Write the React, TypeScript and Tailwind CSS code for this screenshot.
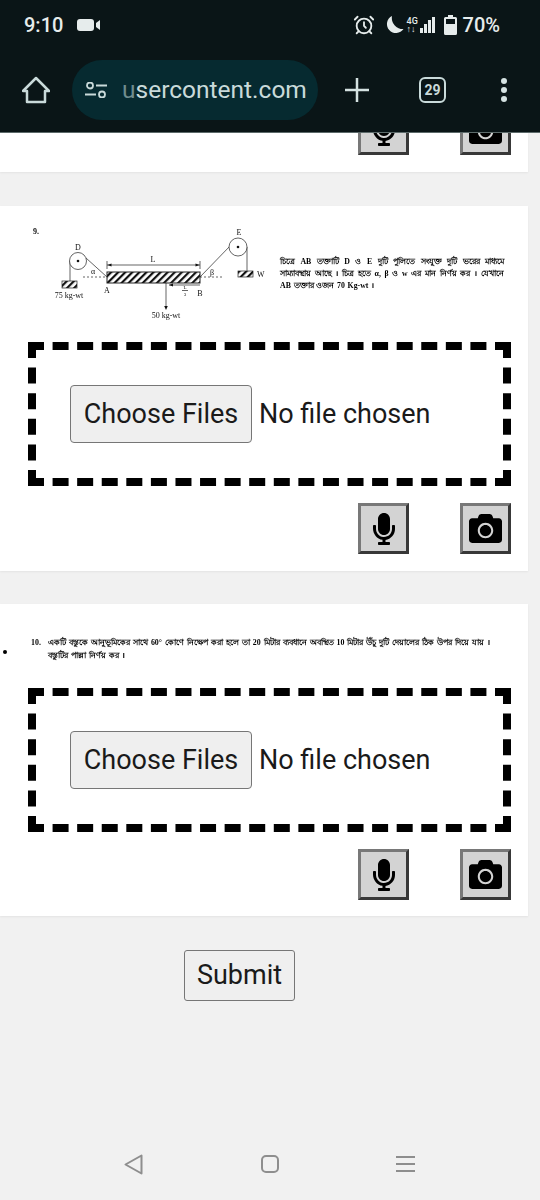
import { AlarmClock } from "lucide-react";
import { FaCamera, FaMicrophone } from "react-icons/fa";

function StatusBar() {
    return (
        <div className="flex h-[50px] items-center justify-between pl-[24px] pr-[40px] text-[#e6ecec]">
            <div className="flex items-center gap-[14px]">
                <span className="text-[20px] font-medium">9:10</span>
                <svg width="23" height="12" viewBox="0 0 23 12" fill="currentColor">
                    <rect width="17" height="12" rx="3" />
                    <path d="M19 4l4-3v10l-4-3z" />
                </svg>
            </div>
            <div className="flex items-center">
                <AlarmClock size={22} strokeWidth={2} />
                <svg className="ml-[9px]" width="20" height="18" viewBox="0 0 20 18" fill="currentColor">
                    <path d="M8 0a9 9 0 1 0 11.500 13A11 11 0 0 1 8 0z" />
                </svg>
                <div className="ml-[3px] flex w-[12px] flex-col text-[9px] font-medium leading-[8px]">
                    <span>4G</span>
                    <span>↑↓</span>
                </div>
                <svg className="ml-[1px]" width="15" height="17" viewBox="0 0 15 17" fill="currentColor">
                    <rect x="0" y="11" width="3" height="5" />
                    <rect x="4" y="7" width="3" height="9" />
                    <rect x="8" y="3" width="3" height="13" />
                    <rect x="12" y="0" width="3" height="16" />
                </svg>
                <svg className="ml-[9px]" width="13" height="20" viewBox="0 0 13 20" fill="currentColor">
                    <path d="M4 0h5v2h2.500A1.500 1.500 0 0 1 13 3.500v15a1.500 1.500 0 0 1-1.500 1.500h-10A1.500 1.500 0 0 1 0 18.500v-15A1.500 1.500 0 0 1 1.500 2H4z" />
                    <rect x="2" y="4" width="9" height="5" fill="#0a1517" />
                </svg>
                <span className="ml-[6px] text-[20px] font-medium">70%</span>
            </div>
        </div>
    );
}

function Toolbar() {
    return (
        <div className="flex items-center pt-[10px] text-[#c9dada]">
            <svg className="ml-[22px]" width="28" height="28" viewBox="0 0 28 28" fill="none" stroke="currentColor" strokeWidth="2.500" strokeLinejoin="round">
                <path d="M14 2L27 15h-4v11H5V15H1z" />
            </svg>
            <div className="ml-[22px] flex h-[60px] w-[246px] items-center rounded-[30px] bg-[#062a30]">
                <svg className="ml-[13px]" width="22" height="16" viewBox="0 0 22 16" fill="none" stroke="currentColor" strokeWidth="1.800">
                    <circle cx="5" cy="3.500" r="3" />
                    <path d="M11 3.500h11M0 12.500h11" />
                    <circle cx="17" cy="12.500" r="3" />
                </svg>
                <span className="ml-[15px] text-[24.5px] leading-none">
                    <span className="text-[#6f8c8e]">u</span>sercontent.com
                </span>
            </div>
            <svg className="ml-[27px]" width="24" height="24" viewBox="0 0 24 24" stroke="#d5e2e2" strokeWidth="2.500">
                <path d="M12 0v24M0 12h24" />
            </svg>
            <div className="ml-[50px] flex h-[26px] w-[27px] items-center justify-center rounded-[6px] border-[2.5px] border-[#c9dada] text-[14px] font-bold">
                29
            </div>
            <div className="ml-[55px] flex flex-col gap-[3px]">
                <span className="h-[6px] w-[6px] rounded-full bg-[#d5e2e2]" />
                <span className="h-[6px] w-[6px] rounded-full bg-[#d5e2e2]" />
                <span className="h-[6px] w-[6px] rounded-full bg-[#d5e2e2]" />
            </div>
        </div>
    );
}

function MediaButtons() {
    return (
        <div className="flex justify-end gap-[51px] pr-[17px]">
            <button className="flex h-[51px] w-[51px] items-center justify-center border-[3px] border-t-[#787878] border-l-[#787878] border-r-[#383838] border-b-[#383838] bg-[#d3d3d3] text-black">
                <FaMicrophone size={32} />
            </button>
            <button className="flex h-[51px] w-[51px] items-center justify-center border-[3px] border-t-[#787878] border-l-[#787878] border-r-[#383838] border-b-[#383838] bg-[#d3d3d3] text-black">
                <FaCamera size={33} />
            </button>
        </div>
    );
}

function UploadBox() {
    return (
        <div className="ml-[28px] mr-[17px] flex h-[144px] items-center border-8 border-dashed border-black pl-[34px]">
            <button className="h-[58px] w-[182px] rounded-[4px] border border-[#767676] bg-[#efefef] text-[27px] text-[#1a1a1a]">
                Choose Files
            </button>
            <span className="ml-[7px] text-[27px] text-[#1a1a1a]">No file chosen</span>
        </div>
    );
}

function Diagram() {
    return (
        <svg className="blur-[0.35px]" width="250" height="106" viewBox="30 222 250 106" fontFamily="Liberation Serif, serif" fontSize="8" textAnchor="middle">
            <defs>
                <pattern id="hatch" width="5" height="5" patternUnits="userSpaceOnUse" patternTransform="rotate(45)">
                    <rect width="5" height="5" fill="#fff" />
                    <rect width="2.200" height="5" fill="#111" />
                </pattern>
            </defs>
            <g stroke="#222" strokeWidth="0.7" fill="none">
                <path d="M70 261V281M86 258L107 277M231 245L200 277M247 247V271" />
                <path d="M83 277H107M200 277H223" strokeDasharray="2 2" />
                <path d="M107 261V269M200 261V269M107 265H200M169 285H200M166 283V307" />
                <circle cx="78" cy="261" r="8.500" fill="#fff" />
                <circle cx="238" cy="247" r="9" fill="#fff" />
                <rect x="62" y="281" width="15" height="7" fill="url(#hatch)" />
                <rect x="238" y="271" width="15" height="6" fill="url(#hatch)" />
                <rect x="107" y="272" width="93" height="11" fill="url(#hatch)" strokeWidth="1" />
                <path d="M182 290.500H188" />
            </g>
            <g fill="#111">
                <circle cx="78" cy="261" r="1.300" />
                <circle cx="238" cy="247" r="1.300" />
                <path d="M107.500 265l4-1.500v3zM199.500 265l-4-1.500v3zM169 285l4-1.500v3zM166 310l-1.800-4h3.600z" />
                <text x="33" y="234" textAnchor="start" fontWeight="700">9.</text>
                <text x="78" y="250">D</text>
                <text x="239" y="235">E</text>
                <text x="153" y="262">L</text>
                <text x="107" y="293">A</text>
                <text x="200" y="296">B</text>
                <text x="93" y="274">α</text>
                <text x="212" y="275">β</text>
                <text x="257" y="277" textAnchor="start">W</text>
                <text x="69" y="298">75 kg-wt</text>
                <text x="166" y="318">50 kg-wt</text>
                <text x="185" y="289" fontSize="5">L</text>
                <text x="185" y="296" fontSize="5">3</text>
            </g>
        </svg>
    );
}

export default function App() {
    return (
        <div className="flex h-[1200px] w-[540px] flex-col overflow-hidden bg-[#f1f1f1] font-['Roboto',sans-serif]">
            <header className="h-[133px] shrink-0 border-b border-[#5d6b6b] bg-[#0a1517]">
                <StatusBar />
                <Toolbar />
            </header>

            <section className="flex h-[39px] w-[528px] shrink-0 flex-col justify-end overflow-hidden bg-white pb-[17px] shadow-[0_1px_2px_rgba(0,0,0,0.06)]">
                <div className="shrink-0">
                    <MediaButtons />
                </div>
            </section>

            <section className="mt-[34px] h-[365px] w-[528px] shrink-0 bg-white shadow-[0_1px_2px_rgba(0,0,0,0.06)]">
                <div className="flex h-[136px] pl-[30px] pt-[16px]">
                    <Diagram />
                    <p className="w-[224px] pt-[34px] text-justify font-['Liberation_Serif','Noto_Sans',serif] text-[7.8px] font-bold leading-[12px] text-black blur-[0.3px] [word-spacing:0.8px]">
                        চিত্রে AB তক্তাটি D ও E দুটি পুলিতে সংযুক্ত দুটি ভরের মাধ্যমে সাম্যাবস্থায় আছে । চিত্র হতে α, β ও w এর মান নির্ণয় কর । যেখানে AB তক্তার ওজন 70 Kg-wt ।
                    </p>
                </div>
                <UploadBox />
                <div className="mt-[17px]">
                    <MediaButtons />
                </div>
            </section>

            <section className="mt-[33px] h-[312px] w-[528px] shrink-0 bg-white shadow-[0_1px_2px_rgba(0,0,0,0.06)]">
                <div className="flex h-[84px] pl-[3px] pt-[32px] font-['Liberation_Serif','Noto_Sans',serif] text-[7.9px] font-bold leading-[13px] text-black [word-spacing:1px]">
                    <span className="mt-[14px] h-[4px] w-[4px] shrink-0 rounded-full bg-black" />
                    <span className="ml-[24px] w-[17px] shrink-0 blur-[0.3px]">10.</span>
                    <p className="w-[460px] blur-[0.3px]">
                        একটি বস্তুকে আনুভূমিকের সাথে 60° কোণে নিক্ষেপ করা হলে তা 20 মিটার ব্যবধানে অবস্থিত 10 মিটার উঁচু দুটি দেয়ালের ঠিক উপর দিয়ে যায় । বস্তুটির পাল্লা নির্ণয় কর ।
                    </p>
                </div>
                <UploadBox />
                <div className="mt-[17px]">
                    <MediaButtons />
                </div>
            </section>

            <div className="mt-[34px] flex shrink-0 justify-center pr-[61px]">
                <button className="h-[51px] w-[111px] rounded-[3px] border border-[#767676] bg-[#efefef] text-[27px] text-[#1a1a1a]">
                    Submit
                </button>
            </div>

            <nav className="mt-auto flex h-[72px] shrink-0 items-center text-[#8e8e8e]">
                <svg className="ml-[124px]" width="19" height="21" viewBox="0 0 19 21" fill="none" stroke="currentColor" strokeWidth="2" strokeLinejoin="round">
                    <path d="M1.500 10.500L17.500 1.500V19.500z" />
                </svg>
                <svg className="ml-[118px]" width="18" height="18" viewBox="0 0 18 18" fill="none" stroke="currentColor" strokeWidth="2">
                    <rect x="1" y="1" width="16" height="16" rx="4" />
                </svg>
                <svg className="ml-[117px]" width="19" height="18" viewBox="0 0 19 18" stroke="currentColor" strokeWidth="2">
                    <path d="M0 2h19M0 9h19M0 16h19" />
                </svg>
            </nav>
        </div>
    );
}
